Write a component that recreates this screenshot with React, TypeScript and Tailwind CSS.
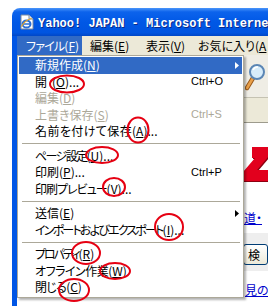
import React from 'react';

type Item =
  | 'sep'
  | {
      label: string;
      accel: string;
      dots?: boolean;
      shortcut?: string;
      arrow?: boolean;
      disabled?: boolean;
      active?: boolean;
      gap?: boolean;
      track?: string;
    };

// MS UI Gothic kana are narrower than Noto's, so some labels get tightened
const items: Item[] = [
  { label: '新規作成', accel: 'N', arrow: true, active: true },
  { label: '開', accel: 'O', dots: true, shortcut: 'Ctrl+O', gap: true },
  { label: '編集', accel: 'D', disabled: true },
  { label: '上書き保存', accel: 'S', shortcut: 'Ctrl+S', disabled: true },
  { label: '名前を付けて保存', accel: 'A', dots: true, track: 'tracking-[0.4px]' },
  'sep',
  { label: 'ページ設定', accel: 'U', dots: true, track: 'tracking-[-1.6px]' },
  { label: '印刷', accel: 'P', dots: true, shortcut: 'Ctrl+P' },
  { label: '印刷プレビュー', accel: 'V', dots: true, track: 'tracking-[-1px]' },
  'sep',
  { label: '送信', accel: 'E', arrow: true },
  { label: 'インポートおよびエクスポート', accel: 'I', dots: true, track: 'tracking-[-1.8px]' },
  'sep',
  { label: 'プロパティ', accel: 'R', track: 'tracking-[-2px]' },
  { label: 'オフライン作業', accel: 'W', track: 'tracking-[-0.5px]' },
  { label: '閉じる', accel: 'C', track: 'tracking-[-0.7px]' },
];

const jp = "font-['Noto_Sans_CJK_JP',sans-serif] [font-feature-settings:'palt']";

function IeIcon() {
  return (
    <svg className="shrink-0" width="14" height="16" viewBox="0 0 14 16">
      <path d="M1 1h8l4 4v10H1z" fill="#fff" stroke="#7a8aa0" strokeWidth="1" />
      <path d="M9 1v4h4" fill="#dfe6ee" stroke="#7a8aa0" strokeWidth="1" />
      <ellipse cx="6.5" cy="10" rx="4" ry="3.6" fill="none" stroke="#2a6fd6" strokeWidth="2" />
      <path d="M3 10h7" stroke="#2a6fd6" strokeWidth="1.6" />
      <path d="M1.5 12.5c2-4 6-7 10-8" fill="none" stroke="#e8a41c" strokeWidth="1.2" />
    </svg>
  );
}

function TitleBar() {
  return (
    <div className="flex h-[28px] items-center gap-[4px] overflow-hidden whitespace-nowrap rounded-tl-[8px] bg-[linear-gradient(180deg,#4a95fa_0%,#0c63ec_14%,#0058e6_50%,#0054e0_88%,#0047c6_100%)] pl-[8px]">
      <IeIcon />
      <span className="shrink-0 pt-[3px] font-['Liberation_Mono',monospace] text-[12px] font-bold text-white [text-shadow:1px_1px_0_#0a2a8a]">
        Yahoo! JAPAN - Microsoft Interne
      </span>
    </div>
  );
}

function MenuBar() {
  return (
    <div className={`flex h-[19px] whitespace-nowrap bg-[#ECE9D8] text-[12px] text-black ${jp}`}>
      <div className="flex w-[65px] items-center bg-[#316AC5] pl-[9px] text-white">
        <span className="tracking-[-0.8px]">ファイル</span>(<span className="underline">F</span>)
      </div>
      <div className="flex w-[55px] items-center pl-[8px]">
        編集(<span className="underline">E</span>)
      </div>
      <div className="flex w-[56px] items-center pl-[9px]">
        表示(<span className="underline">V</span>)
      </div>
      <div className="flex items-center pl-[5px]">
        お気に入り(<span className="underline">A</span>
      </div>
    </div>
  );
}

function Toolbar() {
  return (
    <>
      <div className="flex h-[43px] justify-end border-b border-[#C5C2B2] bg-[#EFEDE5]">
        <svg className="mr-[3px] mt-[8px]" width="20" height="28" viewBox="0 0 20 28">
          <path d="M8 15 2 25" stroke="#9a5a1c" strokeWidth="4.5" strokeLinecap="round" />
          <path d="M8 15 2 25" stroke="#e9a049" strokeWidth="2.5" strokeLinecap="round" />
          <circle cx="12" cy="9" r="7" fill="#d7ecfa" stroke="#5b86b5" strokeWidth="2" />
          <path d="M8 7a5 5 0 0 1 5-3" fill="none" stroke="#fff" strokeWidth="1.5" />
        </svg>
      </div>
      <div className="h-[25px] border-b border-[#9D9B8D] bg-[#ECE9D8]" />
    </>
  );
}

function Page() {
  return (
    <div className={`bg-white text-[12px] ${jp}`}>
      <div className="flex h-[59px] items-end justify-end">
        <svg width="25" height="36" viewBox="0 0 25 36">
          <path d="M9 1h16v10L14 24h11v11H0v-9L12 12H9z" fill="#8c0010" transform="translate(1 1)" />
          <path d="M9 1h16v10L14 24h11v11H0v-9L12 12H9z" fill="#e2001d" />
        </svg>
      </div>
      <div className="mt-[28px] h-[16px] whitespace-nowrap pl-[227px] leading-[16px] text-[#0000CC] underline">
        道・
      </div>
      <div className="mt-[7px] flex h-[38px] items-start bg-[#EEEEEE] pt-[11px]">
        <div className="ml-[180px] h-[19px] w-[49px] border border-[#7F9DB9] bg-white" />
        <div className="ml-[7px] flex h-[21px] w-[30px] items-center rounded-[3px] border border-[#003C74] bg-[linear-gradient(#ffffff,#ece9d8)] pl-[4px] leading-none">
          検
        </div>
      </div>
      <div className="mt-[11px] h-[16px] whitespace-nowrap pl-[228px] leading-[16px] text-[#0000CC] underline">
        見の
      </div>
      <div className="h-[20px]" />
    </div>
  );
}

function Arrow({ white }: { white?: boolean }) {
  return (
    <svg width="4" height="7" viewBox="0 0 4 7" className="mr-[3px]">
      <path d="M0 0l4 3.5L0 7z" fill={white ? '#fff' : '#000'} />
    </svg>
  );
}

function FileMenu() {
  return (
    <div
      className={`absolute left-[17px] top-[55px] w-[227px] border border-[#ACA899] bg-white p-[1px] text-[12px] shadow-[2px_2px_2px_rgba(0,0,0,0.3)] ${jp}`}
    >
      {items.map((it, i) => {
        if (it === 'sep') {
          return (
            <div key={i} className="flex h-[8px] items-center pl-[3px] pr-[2px]">
              <div className="h-px w-full bg-[#ACA899]" />
            </div>
          );
        }
        const color = it.active ? 'bg-[#316AC5] text-white' : it.disabled ? 'text-[#ACA899]' : 'text-black';
        return (
          <div key={i} className={`flex h-[16.5px] items-center whitespace-nowrap pl-[16px] ${color}`}>
            <span className="w-[156px] shrink-0 leading-none">
              <span className={it.track ?? ''}>{it.label}</span>
              <span className={it.gap ? 'ml-[5px]' : ''}>
                (<span className="underline">{it.accel}</span>){it.dots ? '...' : ''}
              </span>
            </span>
            <span className="flex-1 font-['Liberation_Sans',Arial,sans-serif] text-[11px] leading-none">
              {it.shortcut}
            </span>
            {it.arrow && <Arrow white={it.active} />}
          </div>
        );
      })}
    </div>
  );
}

function Annotations() {
  const rings = [
    [67, 84, 17, 8.5],
    [138, 130, 10.5, 12.5],
    [102, 155, 16, 8],
    [114, 187, 11, 9],
    [169, 227, 14, 13],
    [86, 253, 14, 11],
    [115, 271, 15, 8],
    [74, 290, 15, 11],
  ];
  return (
    <svg className="pointer-events-none absolute left-0 top-0" width="268" height="306">
      {rings.map(([cx, cy, rx, ry], i) => (
        <ellipse key={i} cx={cx} cy={cy} rx={rx} ry={ry} fill="none" stroke="#E60012" strokeWidth="2" />
      ))}
    </svg>
  );
}

export default function App() {
  return (
    <div className="relative h-[306px] w-[268px] overflow-hidden bg-white">
      <div className="pl-[12px] pt-[8px]">
        <TitleBar />
        <div className="border-l-[5px] border-[#0055E5]">
          <MenuBar />
          <Toolbar />
          <Page />
        </div>
      </div>
      <FileMenu />
      <Annotations />
    </div>
  );
}
